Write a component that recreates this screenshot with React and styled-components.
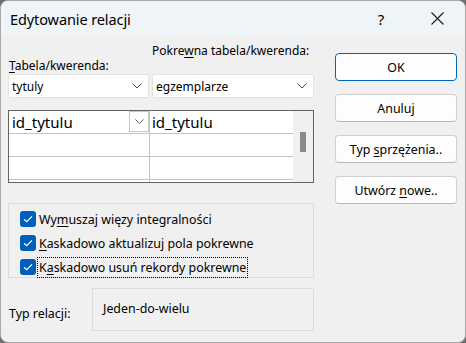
import React from 'react'
import styled, { createGlobalStyle } from 'styled-components'

const Global = createGlobalStyle`
  html, body { margin: 0; padding: 0; background: #6e6e6e; }
  body { font-family: "Noto Sans", "Open Sans", sans-serif; }
`

// dialog frame
const Window = styled.div`
  width: 466px;
  height: 343px;
  box-sizing: border-box;
  border: 1px solid #a8a8a8;
  border-radius: 8px;
  overflow: hidden;
  background: #f0f0f0;
  display: flex;
  flex-direction: column;
  color: #000;
`

const TitleBar = styled.div`
  height: 35px;
  background: #eff4f9;
  display: flex;
  align-items: center;
  padding-left: 9px;
  font-size: 14.5px;
`

const Title = styled.div`
  flex: 1;
  letter-spacing: -0.1px;
`

const TitleButton = styled.div`
  width: 56px;
  height: 35px;
  display: flex;
  align-items: center;
  justify-content: center;
  font-size: 15px;
`

const Body = styled.div`
  flex: 1;
  display: flex;
  padding: 7px 9px 0 7px;
  gap: 21px;
  font-size: 12px;
`

const Main = styled.div`
  width: 306px;
  display: flex;
  flex-direction: column;
`

const Header = styled.div`
  display: grid;
  grid-template-columns: 141px 162px;
  column-gap: 3px;
  height: 31px;
`

const Label = styled.span`
  align-self: ${p => (p.$top ? 'start' : 'end')};
  padding-left: ${p => (p.$top ? '0' : '1px')};
  line-height: 14px;
  white-space: nowrap;
  padding-bottom: ${p => (p.$top ? '0' : '1px')};
  padding-top: ${p => (p.$top ? '1px' : '0')};
`

const Key = styled.span`
  text-decoration: underline;
  text-underline-offset: 2px;
`

const Combos = styled.div`
  display: grid;
  grid-template-columns: 141px 162px;
  column-gap: 3px;
`

const Combo = styled.div`
  height: 24px;
  box-sizing: border-box;
  background: #fff;
  border: 1px solid #e3e3e3;
  border-radius: 2px;
  display: flex;
  align-items: center;
  justify-content: space-between;
  padding: 0 6px 0 3px;
  font-size: 12px;
`

const Chevron = ({ size = 10 }) => (
  <svg width={size} height={size * 0.6} viewBox="0 0 10 6">
    <path d="M0.5 0.5 L5 5 L9.5 0.5" fill="none" stroke="#444" strokeWidth="1" />
  </svg>
)

const Grid = styled.div`
  margin-top: 12px;
  height: 73px;
  box-sizing: border-box;
  border: 1px solid #646464;
  display: flex;
  overflow: hidden;
`

const Cells = styled.div`
  flex: 1;
  background: #fff;
  display: flex;
  flex-direction: column;
`

const Row = styled.div`
  height: 23px;
  flex-shrink: 0;
  box-sizing: border-box;
  border-bottom: 1px solid #c3c3c3;
  display: grid;
  grid-template-columns: 141px 1fr;
`

const Cell = styled.div`
  border-right: ${p => (p.$first ? '1px solid #c3c3c3' : 'none')};
  display: flex;
  align-items: center;
  justify-content: space-between;
  padding-left: ${p => (p.$first ? '3px' : '2px')};
  font-size: 15px;
`

const CellDrop = styled.div`
  width: 20px;
  height: 21px;
  box-sizing: border-box;
  border: 1px solid #c8c8c8;
  background: #fff;
  display: flex;
  align-items: center;
  justify-content: center;
  align-self: flex-start;
`

const Scroll = styled.div`
  width: 20px;
  background: #f0f0f0;
  display: flex;
  justify-content: center;
  padding-top: 21px;
`

const Thumb = styled.div`
  width: 6px;
  height: 20px;
  background: #8a8a8a;
`

const Group = styled.div`
  margin-top: 20px;
  height: 75px;
  box-sizing: border-box;
  border: 1px solid #dcdcdc;
  display: flex;
  flex-direction: column;
  padding: 7px 0 0 11px;
  gap: 8px;
`

const Check = styled.label`
  display: flex;
  align-items: center;
  height: 16px;
  gap: 2px;
  font-size: 12.4px;
`

const Box = styled.span`
  width: 16px;
  height: 16px;
  border-radius: 3px;
  background: #005fb8;
  display: flex;
  align-items: center;
  justify-content: center;
`

const CheckText = styled.span`
  padding: 1px 1px;
  outline: ${p => (p.$focus ? '1px dotted #000' : 'none')};
  line-height: 17px;
  white-space: nowrap;
`

const Relation = styled.div`
  margin-top: 10px;
  display: flex;
  align-items: flex-start;
`

const RelLabel = styled.span`
  width: 83px;
  padding-top: 17px;
  padding-left: 1px;
  font-size: 12.4px;
`

const RelBox = styled.div`
  width: 222px;
  height: 43px;
  box-sizing: border-box;
  border: 1px solid #dcdcdc;
  padding: 11px 0 0 10px;
  font-size: 12.4px;
`

const Side = styled.div`
  display: flex;
  flex-direction: column;
  gap: 13px;
  padding-top: 10px;
`

const Button = styled.button`
  width: 122px;
  height: 28px;
  box-sizing: border-box;
  background: #fdfdfd;
  border: 1px solid ${p => (p.$primary ? '#0067c0' : '#d0d0d0')};
  border-bottom-color: ${p => (p.$primary ? '#0067c0' : '#b8b8b8')};
  border-radius: 4px;
  font-family: inherit;
  font-size: 12.4px;
  color: #000;
  padding: 0;
`

const Tick = () => (
  <svg width="10" height="8" viewBox="0 0 10 8">
    <path d="M1 4.2 L3.7 6.7 L9 1.3" fill="none" stroke="#fff" strokeWidth="1.2" />
  </svg>
)

const Close = () => (
  <svg width="13" height="13" viewBox="0 0 13 13">
    <path d="M0.5 0.5 L12.5 12.5 M12.5 0.5 L0.5 12.5" stroke="#1a1a1a" strokeWidth="1.1" />
  </svg>
)

const checks = [
  { pre: 'Wy', key: 'm', post: 'uszaj więzy integralności' },
  { pre: '', key: 'K', post: 'askadowo aktualizuj pola pokrewne' },
  { pre: 'K', key: 'a', post: 'skadowo usuń rekordy pokrewne', focus: true },
]

const App = () => {
  return (
    <>
      <Global />
      <Window>
        <TitleBar>
          <Title>Edytowanie relacji</Title>
          <TitleButton>?</TitleButton>
          <TitleButton><Close /></TitleButton>
        </TitleBar>
        <Body>
          <Main>
            <Header>
              <Label><Key>T</Key>abela/kwerenda:</Label>
              <Label $top>Pokre<Key>w</Key>na tabela/kwerenda:</Label>
            </Header>
            <Combos>
              <Combo>tytuly<Chevron /></Combo>
              <Combo>egzemplarze<Chevron /></Combo>
            </Combos>
            <Grid>
              <Cells>
                <Row>
                  <Cell $first>id_tytulu<CellDrop><Chevron size={9} /></CellDrop></Cell>
                  <Cell>id_tytulu</Cell>
                </Row>
                <Row><Cell $first /><Cell /></Row>
                <Row><Cell $first /><Cell /></Row>
                <Row><Cell $first /><Cell /></Row>
              </Cells>
              <Scroll><Thumb /></Scroll>
            </Grid>
            <Group>
              {checks.map((c, i) => (
                <Check key={i}>
                  <Box><Tick /></Box>
                  <CheckText $focus={c.focus}>{c.pre}<Key>{c.key}</Key>{c.post}</CheckText>
                </Check>
              ))}
            </Group>
            <Relation>
              <RelLabel>Typ relacji:</RelLabel>
              <RelBox>Jeden-do-wielu</RelBox>
            </Relation>
          </Main>
          <Side>
            <Button $primary>OK</Button>
            <Button>Anuluj</Button>
            <Button>Typ <Key>s</Key>przężenia..</Button>
            <Button>Utwórz <Key>n</Key>owe..</Button>
          </Side>
        </Body>
      </Window>
    </>
  )
}

export default App
